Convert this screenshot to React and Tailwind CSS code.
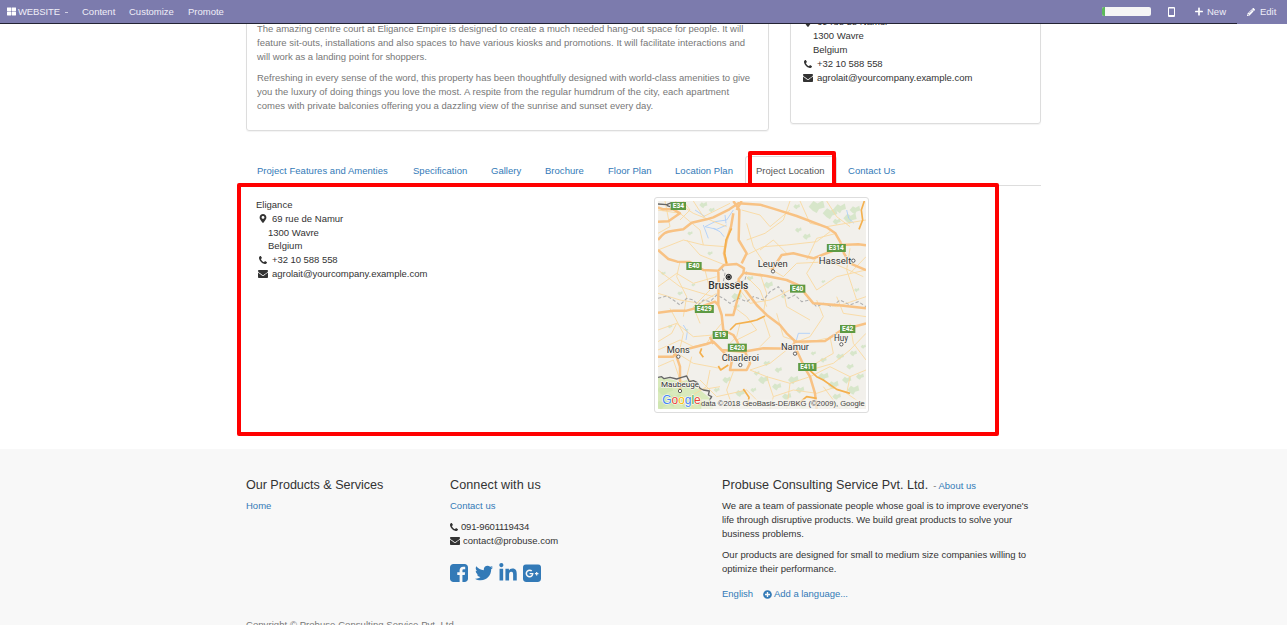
import React from "react";
import {
  FaThLarge,
  FaPlus,
  FaPencilAlt,
  FaMapMarkerAlt,
  FaTwitter,
  FaLinkedinIn,
  FaGooglePlusSquare,
  FaPlusCircle,
} from "react-icons/fa";

function Phone({ className }) {
  return (
    <svg viewBox="0 0 1408 1408" fill="currentColor" className={className}>
      <path d="M1408 1112q0 27-10 70.5t-21 68.5q-21 50-122 106-94 51-186 51-27 0-53-3.5t-57.5-12.5-47-14.5-55.5-20.5-49-18q-98-35-175-83-127-79-264-216t-216-264q-48-77-83-175-3-9-18-49t-20.5-55.5-14.5-47-12.5-57.5-3.5-53q0-92 51-186 56-101 106-122 25-11 68.5-21t70.5-10q14 0 21 3 18 6 53 76 11 19 30 54t35 63.5 31 53.5q3 4 17.5 25t21.5 35.5 7 28.5q0 20-28.5 50t-62 55-62 53-28.5 46q0 9 5 22.5t8.5 20.5 14 24 11.5 19q76 137 174 235t235 174q2 1 19 11.5t24 14 20.5 8.5 22.5 5q18 0 46-28.5t53-62 55-62 50-28.5q14 0 28.5 7t35.5 21.5 25 17.5q25 15 53.5 31t63.5 35 54 30q70 35 76 53 3 7 3 21z" />
    </svg>
  );
}

function Envelope({ className }) {
  return (
    <svg viewBox="0 256 1792 1408" fill="currentColor" className={className}>
      <path d="M1792 710v794q0 66-47 113t-113 47h-1472q-66 0-113-47t-47-113v-794q44 49 101 87 362 246 497 345 57 42 92.5 65.5t94.5 48 110 24.5h2q51 0 110-24.5t94.5-48 92.5-65.5q170-123 498-345 57-39 100-87zm0-294q0 79-49 151t-122 123q-376 261-468 325-10 7-42.5 31t-54 38.8-52 32.5-57.5 27-50 9h-2q-23 0-50-9t-57.5-27-52-32.5-54-38.8-42.5-31q-91-64-262-182.5t-205-142.5q-62-42-117-115.5t-55-136.5q0-78 41.5-130t118.5-52h1472q65 0 112.5 47t47.5 113z" />
    </svg>
  );
}

function FacebookSquare({ className }) {
  return (
    <svg viewBox="0 128 1536 1536" fill="currentColor" className={className}>
      <path d="M1248 128q119 0 203.5 84.5t84.5 203.5v960q0 119-84.5 203.5t-203.5 84.5h-188v-595h199l30-232h-229v-148q0-56 23.5-84t91.5-28l122-1v-207q-63-9-178-9-136 0-217.5 80t-81.5 226v171h-200v232h200v595h-532q-119 0-203.5-84.5t-84.5-203.5v-960q0-119 84.5-203.5t203.5-84.5h960z" />
    </svg>
  );
}

function Navbar() {
  return (
    <header className="relative z-10 flex h-6 justify-between bg-[#7c7bad] text-[9.5px] leading-[23px] text-[#f0eef8]">
      <div className="flex grow border-b border-[#222233] pl-[7px]">
        <div className="flex w-[75px] items-center">
          <FaThLarge className="mr-[2px] h-[9px] w-[9px] text-white" />
          <span className="tracking-[-0.1px]">WEBSITE</span>
          <span className="mt-[2px] ml-[5px] h-px w-[3px] bg-[#d0cfe4]" />
        </div>
        <span className="w-[47px]">Content</span>
        <span className="w-[59px]">Customize</span>
        <span>Promote</span>
      </div>
      <div className="flex items-center border-b border-[#222233]">
        <div className="flex h-[9px] w-[49px] overflow-hidden rounded-[2px] bg-[#f5f5f5]">
          <span className="w-[3px] bg-[#5cb85c]" />
        </div>
        <svg viewBox="0 0 7 10" className="ml-[17px] h-[10px] w-[7px]">
          <path fill="#fff" fillRule="evenodd" d="M1 0h5q1 0 1 1v8q0 1-1 1H1q-1 0-1-1V1q0-1 1-1zM1 1.5v6.5h5v-6.5z" />
        </svg>
        <FaPlus className="ml-[20px] h-[9px] w-[8px] text-white" />
        <span className="ml-[4px] w-[30px]">New</span>
      </div>
      <div className="flex w-[50px] items-center pb-px pl-[10px]">
        <FaPencilAlt className="mr-[5px] h-[8px] w-[8px] text-white" />
        <span>Edit</span>
      </div>
    </header>
  );
}

function Address({ className, name }) {
  return (
    <address className={className}>
      {name && <div>{name}</div>}
      <div className="flex items-center">
        <FaMapMarkerAlt className="mr-[5px] ml-[3px] h-[9px] w-[8px]" />
        <span>69 rue de Namur</span>
      </div>
      <div className="pl-3">1300 Wavre</div>
      <div className="pl-3">Belgium</div>
      <div className="flex items-center">
        <Phone className="mr-[5px] ml-[3px] h-[8px] w-[8px]" />
        <span className="tracking-[-0.05px]">+32 10 588 558</span>
      </div>
      <div className="flex items-center">
        <Envelope className="mr-[4px] ml-[2px] h-[8px] w-[10px]" />
        <span className="tracking-[-0.03px]">agrolait@yourcompany.example.com</span>
      </div>
    </address>
  );
}

const tabs = [
  { label: "Project Features and Amenties", width: "w-[156px]" },
  { label: "Specification", width: "w-[78px]" },
  { label: "Gallery", width: "w-[54px]" },
  { label: "Brochure", width: "w-[63px]" },
  { label: "Floor Plan", width: "w-[67px]" },
  { label: "Location Plan", width: "w-[81px]" },
  { label: "Project Location", width: "w-[92px]", active: true },
  { label: "Contact Us", width: "w-[70px]" },
];

function Tabs() {
  return (
    <nav className="mt-[25px] flex h-[30px] border-b border-[#ddd] tracking-[0.03px] whitespace-nowrap text-[#337ab7]">
      {tabs.map((t) =>
        t.active ? (
          <span key={t.label} className={`${t.width} h-[30px] shrink-0 rounded-t-[3px] border border-b-0 border-[#ddd] bg-white pl-[10px] leading-[28px] text-[#555]`}>
            {t.label}
          </span>
        ) : (
          <span key={t.label} className={`${t.width} shrink-0 pl-[11px] leading-[30px]`}>
            {t.label}
          </span>
        )
      )}
    </nav>
  );
}

const minorRoads = [
  "M24 60L90 70 150 120 160 165M24 180L100 150 160 165 225 170M45 33L60 110 24 130M130 33L160 80 240 40M100 33L120 60 90 90",
  "M75 33L130 70 230 110M225 225L150 195 110 150M275 60L330 75 360 110 420 60M290 150L345 130 400 90 420 33M290 195L340 170 410 165 500 155 540 125",
  "M290 100L310 170 350 230M350 230L400 260 440 220 540 215 640 260M410 190L370 150 330 180M450 33L480 100 530 110 648 90M530 33L560 80 600 110",
  "M500 200L470 250 500 300 560 260 648 240M560 130L500 145 470 210M600 175L590 240 620 330M648 200L600 250M24 290L80 250 130 280 200 260M24 240L90 290 190 320",
  "M90 215L80 260 110 320 100 380M200 310L150 340 90 330 24 310M165 240L180 300 130 350 150 400M270 300L300 340 360 330 420 300 440 290M330 250L350 310 340 370",
  "M290 260L330 300 350 350M400 300L410 350 480 390M500 330L520 380 480 440 430 460M560 320L580 370 648 380M648 320L560 350 500 340M24 420L80 400 130 440 190 435",
  "M24 480L90 450 130 470 170 460M60 355L100 430 90 475M250 350L290 380 320 420 260 450M215 400L190 430 170 460M270 400L260 440 240 460M340 380L360 440 330 470",
  "M380 370L400 440 460 460 530 445M440 450L410 480 360 520 300 540M540 440L550 490 480 530M600 400L610 460 648 510M648 430L600 480 550 520 480 540M24 530L70 510 90 570 130 590",
  "M90 495L130 520 210 535M125 500L110 560 150 600 210 590M250 545L230 600 250 657M300 540L350 560 370 620 360 657M350 560L420 580 480 560M370 620L430 600 500 610 560 590",
  "M150 570L200 620 290 600 340 650M480 560L540 530 600 560 648 540M520 590L570 657M600 560L590 610 648 650M420 580L410 657M180 540L170 590 120 620 130 657M24 455L65 430 80 400",
];

const motorways = [
  "M24 95L55 94 90 70 70 58 40 58 24 52M24 150C40 130 45 125 70 122L100 118 125 98 170 88 190 82 238 58 265 40 330 44 370 56 440 78 530 112 556 130 572 158",
  "M572 158L582 190 600 220 648 240M572 165L625 163 648 166M250 33L268 60 266 150 290 190 275 220M275 33L260 60M250 70L243 110 230 150 222 190 230 222",
  "M24 180L55 207 82 215 120 216 160 240 205 242 222 225 260 222 282 235 280 250 264 270M280 248L350 258 410 270 450 288 465 310 490 340 560 345 648 355",
  "M365 240L395 195 430 190 490 205 555 180M264 270L290 305 320 345 350 375 390 405 410 430 440 458M205 245L206 280 205 320 205 345 215 375 220 420 250 435 262 455 270 480",
  "M24 368L70 362 110 362 160 348 195 335 205 345M225 375L250 375 262 330M24 500L70 500 78 486 120 475 170 462 190 455 215 480 280 485 340 475 430 476",
  "M430 455L525 453 575 420 648 400M430 460L465 535 480 560 495 610 500 657M190 462L180 440M75 486L90 530 90 600M215 480L245 515 240 540 290 540 300 520 285 485",
];

const orangeRoads = [
  "M643 33L634 60 638 90 627 118M240 420L258 402 300 395 320 390 345 378M155 475L150 488 160 502M205 528L212 540 235 525M280 597L297 622 292 650M470 532L500 560 520 570 560 598 600 610",
  "M500 625L470 620 440 645M245 115L228 150 224 190 230 220M275 290L262 330",
];

const greens = [
  [500, 50, 24], [540, 70, 22], [570, 55, 18], [600, 85, 20], [615, 60, 16], [560, 95, 12], [440, 50, 10], [470, 140, 12],
  [160, 45, 12], [185, 60, 9], [120, 130, 8], [180, 190, 8], [40, 250, 7], [90, 310, 8], [260, 320, 16], [260, 350, 9],
  [300, 265, 10], [355, 285, 14], [130, 285, 6], [400, 320, 7], [445, 120, 10], [520, 275, 6], [620, 300, 8],
  [60, 410, 7], [110, 420, 5], [45, 600, 24], [70, 630, 26], [110, 640, 20], [35, 645, 18], [150, 640, 12], [230, 570, 13],
  [270, 610, 14], [340, 570, 16], [380, 590, 14], [430, 570, 16], [410, 620, 14], [450, 600, 13], [350, 520, 10],
  [385, 540, 11], [520, 560, 16], [550, 585, 16], [590, 570, 14], [610, 600, 18], [560, 620, 13], [590, 645, 12], [630, 560, 12],
  [520, 510, 10], [570, 500, 12], [610, 490, 11], [490, 490, 8], [330, 640, 12], [530, 645, 10], [630, 640, 9], [200, 600, 9],
  [310, 600, 9], [640, 470, 8], [460, 650, 9], [600, 530, 11], [320, 550, 9],
];

const shields = [
  ["E34", 85, 48, 46], ["E314", 559, 174, 57], ["E40", 132, 228, 46], ["E40", 443, 296, 46], ["E429", 163, 357, 57],
  ["E19", 211, 435, 46], ["E420", 262, 473, 57], ["E42", 593, 417, 46], ["E411", 472, 531, 55],
];

const towns = [
  ["Leuven", 368, 230, 90, 28, 369, 244], ["Hasselt", 555, 222, 98, 28, 610, 212], ["Mons", 85, 488, 69, 28, 85, 500],
  ["Charleroi", 271, 514, 112, 28, 271, 525], ["Namur", 435, 480, 84, 28, 435, 491], ["Huy", 573, 452, 42, 25, 574, 463],
  ["Maubeuge", 90, 592, 114, 23, 90, 603],
];

function RegionMap() {
  return (
    <svg viewBox="24 33 624 624" className="h-[208px] w-[208px] font-['Roboto',sans-serif]">
      <rect x="24" y="33" width="624" height="624" fill="#f2f0eb" />
      <g fill="#cfe3c0" opacity="0.75">
        {greens.map(([x, y, r], i) => (
          <path key={i} d={`M${x - r} ${y}l${r * 0.6} ${-r * 0.7} ${r * 0.5} ${r * 0.3} ${r * 0.7} ${-r * 0.4} ${r * 0.2} ${r * 0.9} ${-r * 0.7} ${r * 0.2} ${-r * 0.3} ${r * 0.5} ${-r * 0.5} ${-r * 0.3}z`} />
        ))}
      </g>
      <path d="M24 562L50 565 90 575 110 570 130 590 150 600 180 625 190 657H24z" fill="#cbe6a3" opacity="0.65" />
      <g fill="none" stroke="#a9cdfa" strokeWidth="2.5">
        <path d="M165 110L195 95 230 90 250 60M225 75L228 100M165 110L200 118 230 105M160 105L175 145M590 60L596 85 612 100M135 60L165 80" />
        <path d="M100 405L112 425 108 450M438 455L445 430 480 430M285 500L310 505M190 115L210 125 222 140" />
      </g>
      <g fill="none" stroke="#f9d9a0" strokeWidth="2.7" strokeLinejoin="round">
        {minorRoads.map((d) => (
          <path key={d} d={d} />
        ))}
      </g>
      <g fill="none" stroke="#b0b0b0" strokeWidth="3.2" strokeDasharray="10 6">
        <path d="M24 325L50 318 70 330 90 345 110 325 130 330 145 345 160 330 180 335 200 315 220 325 240 340 265 325 290 335 310 320 340 330 360 305 385 290 400 310 415 325 435 315 455 335 480 330 500 350 520 340 545 350 570 330 600 345 625 335 648 350" />
        <path d="M215 235L225 250 220 275 240 282 285 270 290 245" />
      </g>
      <g fill="none" stroke="#f8c284" strokeWidth="7.5" strokeLinejoin="round">
        {motorways.map((d) => (
          <path key={d} d={d} />
        ))}
      </g>
      <g fill="none" stroke="#f4b04e" strokeWidth="5" strokeLinejoin="round">
        {orangeRoads.map((d) => (
          <path key={d} d={d} />
        ))}
      </g>
      <path d="M24 562L35 560 42 566 60 562 80 567 95 562 110 558 118 575 130 572 142 578 150 595 160 600 178 603 175 615 185 620 178 632" fill="none" stroke="#666" strokeWidth="4" strokeLinejoin="round" />
      <path d="M24 42L50 44 65 38M50 46L60 50" fill="none" stroke="#666" strokeWidth="4" />
      {shields.map(([label, x, y, w]) => (
        <g key={label + x}>
          <rect x={x - w / 2} y={y - 12} width={w} height="24" fill="#5e9a43" />
          <text x={x} y={y + 7} textAnchor="middle" textLength={w - 12} lengthAdjust="spacingAndGlyphs" fontSize="20" fontWeight="700" fill="#fff">
            {label}
          </text>
        </g>
      ))}
      <g fill="#333" stroke="#f6f4ef" strokeWidth="4" paintOrder="stroke">
        {towns.map(([label, x, y, w, size]) => (
          <text key={label} x={x} y={y} textAnchor="middle" textLength={w} lengthAdjust="spacingAndGlyphs" fontSize={size}>
            {label}
          </text>
        ))}
        <text x="235" y="298" textAnchor="middle" textLength="120" lengthAdjust="spacingAndGlyphs" fontSize="30" fontWeight="500">
          Brussels
        </text>
      </g>
      {towns.map(([label, , , , , cx, cy]) => (
        <circle key={label} cx={cx} cy={cy} r="5" fill="#fff" stroke="#444" strokeWidth="2.5" />
      ))}
      <circle cx="236" cy="261" r="8" fill="#999" stroke="#222" strokeWidth="3" />
      <circle cx="236" cy="261" r="4.5" fill="#222" />
      <rect x="154" y="628" width="494" height="29" fill="#f5f4f0" opacity="0.7" />
      <g className="font-['Liberation_Sans',sans-serif]">
        <text x="153" y="648" fontSize="21" textLength="491" lengthAdjust="spacingAndGlyphs" fill="#444">
          data ©2018 GeoBasis-DE/BKG (©2009), Google
        </text>
        <text x="37" y="643" fontSize="36" textLength="115" stroke="#fff" strokeWidth="3" paintOrder="stroke">
          <tspan fill="#4285f4">G</tspan>
          <tspan fill="#ea4335">o</tspan>
          <tspan fill="#fbbc05">o</tspan>
          <tspan fill="#4285f4">g</tspan>
          <tspan fill="#34a853">l</tspan>
          <tspan fill="#ea4335">e</tspan>
        </text>
      </g>
    </svg>
  );
}

function Footer() {
  return (
    <footer className="h-[176px] overflow-hidden bg-[#f8f8f8]">
      <div className="ml-[246px] flex h-[169px] pt-[29px]">
        <section className="w-[204px]">
          <h4 className="text-[12.6px] leading-[14px] tracking-[-0.03px]">Our Products &amp; Services</h4>
          <a className="mt-[7px] block text-[#337ab7]">Home</a>
        </section>
        <section className="w-[272px]">
          <h4 className="text-[12.6px] leading-[14px] tracking-[0.08px]">Connect with us</h4>
          <a className="mt-[7px] block text-[#337ab7]">Contact us</a>
          <div className="mt-[7px] flex items-center">
            <Phone className="mr-[3px] h-[8px] w-[8px]" />
            <span className="tracking-[-0.17px]">091-9601119434</span>
          </div>
          <div className="flex items-center">
            <Envelope className="mr-[3px] h-[8px] w-[10px]" />
            <span>contact@probuse.com</span>
          </div>
          <div className="mt-[15px] flex h-[20px] items-center text-[#337ab7]">
            <FacebookSquare className="mr-[7px] h-[18px] w-[18px]" />
            <FaTwitter className="mr-[6px] h-[18px] w-[18px]" />
            <FaLinkedinIn className="mr-[6px] h-[20px] w-[18px]" />
            <span className="flex h-[18px] w-[18px] items-center overflow-hidden rounded-[3.4px]">
              <FaGooglePlusSquare className="h-[21px] w-[18px] shrink-0" />
            </span>
          </div>
        </section>
        <section className="w-[320px] whitespace-nowrap">
          <h4 className="flex h-[14px] items-baseline text-[12.6px] leading-[14px] tracking-[0.03px]">
            Probuse Consulting Service Pvt. Ltd.
            <span className="ml-[5px] text-[9.45px] text-[#777]">
              - <a className="text-[#337ab7]">About us</a>
            </span>
          </h4>
          <p className="mt-[7px]">
            <span className="tracking-[-0.025px]">We are a team of passionate people whose goal is to improve everyone's</span>
            <br />
            <span className="tracking-[-0.015px]">life through disruptive products. We build great products to solve your</span>
            <br />
            business problems.
          </p>
          <p className="mt-[7px]">
            <span className="tracking-[-0.015px]">Our products are designed for small to medium size companies willing to</span>
            <br />
            <span className="tracking-[-0.03px]">optimize their performance.</span>
          </p>
          <div className="mt-[11px] flex items-center text-[#337ab7]">
            <span className="w-[41px]">English</span>
            <FaPlusCircle className="mr-[2px] h-[9px] w-[9px]" />
            <span className="tracking-[-0.03px]">Add a language...</span>
          </div>
        </section>
      </div>
      <div className="ml-[246px] tracking-[0.06px] text-[#777]">Copyright © Probuse Consulting Service Pvt. Ltd.</div>
    </footer>
  );
}

export default function App() {
  return (
    <div className="relative flex h-[625px] w-[1287px] flex-col overflow-hidden bg-white font-['Liberation_Sans',Arial,sans-serif] text-[9.5px] leading-[14px] text-[#333]">
      <Navbar />
      <main className="ml-[246px] h-[425px] w-[795px]">
        <div className="flex items-start justify-between">
          <article className="-mt-[12px] h-[119px] w-[523px] rounded-[3px] border border-[#ddd] pt-[9px] pl-[10px] whitespace-nowrap text-[#777] shadow-[0_1px_1px_rgba(0,0,0,0.05)]">
            <p>
              <span className="tracking-[-0.015px]">
                The amazing centre court at Eligance Empire is designed to create a much needed hang-out space for people. It will
              </span>
              <br />
              <span className="tracking-[0.01px]">
                feature sit-outs, installations and also spaces to have various kiosks and promotions. It will facilitate interactions and
              </span>
              <br />
              <span className="tracking-[-0.03px]">will work as a landing point for shoppers.</span>
            </p>
            <p className="mt-[7px]">
              <span className="tracking-[-0.015px]">
                Refreshing in every sense of the word, this property has been thoughtfully designed with world-class amenities to give
              </span>
              <br />
              <span className="tracking-[0.03px]">
                you the luxury of doing things you love the most. A respite from the regular humdrum of the city, each apartment
              </span>
              <br />
              <span className="tracking-[0.01px]">
                comes with private balconies offering you a dazzling view of the sunrise and sunset every day.
              </span>
            </p>
          </article>
          <aside className="-mt-[12px] h-[112px] w-[251px] rounded-[3px] border border-[#ddd] pt-[2px] pl-[10px] shadow-[0_1px_1px_rgba(0,0,0,0.05)]">
            <Address className="not-italic" />
          </aside>
        </div>
        <Tabs />
        <section className="flex pt-[11px]">
          <Address name="Eligance" className="w-[398px] pt-px pl-[10px] leading-[13.8px] not-italic" />
          <div className="ml-[10px] h-[216px] w-[215px] rounded-[3px] border border-[#ddd] p-[3px]">
            <RegionMap />
          </div>
        </section>
      </main>
      <Footer />
      <div className="absolute top-[151px] left-[748px] h-[36px] w-[88px] rounded-[2px] border-4 border-[#f00]" />
      <div className="absolute top-[183px] left-[237px] h-[253px] w-[762px] rounded-[2px] border-4 border-[#f00]" />
    </div>
  );
}
